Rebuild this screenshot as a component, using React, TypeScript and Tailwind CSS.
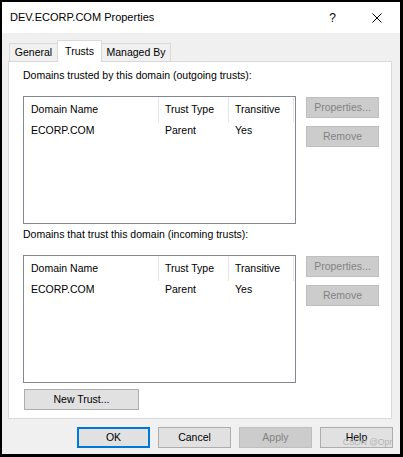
import React from "react";

const font = { fontFamily: '"Liberation Sans", Arial, sans-serif' };

function Btn({ label, w = "w-[73px]", disabled = false, primary = false }: { label: string; w?: string; disabled?: boolean; primary?: boolean }) {
  if (disabled) {
    return (
      <div className={`${w} h-[21px] flex items-center justify-center border border-[#bfbfbf] bg-[#cccccc] text-[#838383]`}>
        {label}
      </div>
    );
  }
  if (primary) {
    return (
      <div className={`${w} h-[21px] flex items-center justify-center border-2 border-[#0078d7] bg-[#e1e1e1] text-black`}>
        {label}
      </div>
    );
  }
  return (
    <div className={`${w} h-[21px] flex items-center justify-center border border-[#adadad] bg-[#e1e1e1] text-black`}>
      {label}
    </div>
  );
}

function TrustList() {
  return (
    <div className="w-[273px] h-[128px] border border-[#828790] bg-white">
      <div className="flex h-[25px]">
        <div className="w-[135px] border-r border-[#e5e5e5] pl-[7px] flex items-center">Domain Name</div>
        <div className="w-[70px] border-r border-[#e5e5e5] pl-[6px] flex items-center">Trust Type</div>
        <div className="w-[65px] border-r border-[#e5e5e5] pl-[6px] flex items-center">Transitive</div>
      </div>
      <div className="flex h-[17px] items-center">
        <div className="w-[135px] pl-[7px]">ECORP.COM</div>
        <div className="w-[70px] pl-[6px]">Parent</div>
        <div className="w-[65px] pl-[6px]">Yes</div>
      </div>
    </div>
  );
}

function Section({ label }: { label: string }) {
  return (
    <>
      <div className="h-[14px] leading-[14px]">{label}</div>
      <div className="flex mt-[14px] gap-[10px]">
        <TrustList />
        <div className="flex flex-col gap-[8px] pt-px">
          <Btn label="Properties..." disabled />
          <Btn label="Remove" disabled />
        </div>
      </div>
    </>
  );
}

export default function App() {
  return (
    <div
      className="w-[403px] h-[457px] border-l-2 border-t-2 border-r-[3px] border-b-[3px] border-black flex flex-col text-[10.5px] text-black bg-[#f0f0f0] overflow-hidden"
      style={font}
    >
      <div className="h-[31px] shrink-0 bg-white flex items-center pl-[8px] text-[11px]">
        <span className="flex-1">DEV.ECORP.COM Properties</span>
        <span className="text-[12px] mr-[36px]">?</span>
        <svg width="10" height="10" viewBox="0 0 10 10" className="mr-[18px]">
          <path d="M0.5 0.5 L9.5 9.5 M9.5 0.5 L0.5 9.5" stroke="#000" strokeWidth="1" fill="none" />
        </svg>
      </div>

      <div className="flex-1 flex flex-col pt-[7px] pl-[6px] pr-[8px] pb-[6px] relative">
        <div className="flex items-end h-[21px] pl-px">
          <div className="w-[48px] h-[18px] border-t border-l border-[#d9d9d9] flex items-center justify-center">General</div>
          <div className="relative z-10 w-[45px] h-[22px] -mb-px bg-white border-t border-l border-r border-[#d9d9d9] flex items-start justify-center pt-[3px]">Trusts</div>
          <div className="w-[69px] h-[18px] border-t border-r border-[#d9d9d9] flex items-center justify-center">Managed By</div>
        </div>

        <div className="h-[358px] bg-white border border-[#d9d9d9] pt-[6px] pl-[14px] flex flex-col">
          <Section label="Domains trusted by this domain (outgoing trusts):" />
          <div className="mt-[3px]">
            <Section label="Domains that trust this domain (incoming trusts):" />
          </div>
          <div className="mt-[6px] ml-px">
            <Btn label="New Trust..." w="w-[115px]" />
          </div>
        </div>

        <div className="flex justify-end gap-[8px] mt-[8px] mr-[-1px]">
          <Btn label="OK" primary />
          <Btn label="Cancel" />
          <Btn label="Apply" disabled />
          <Btn label="Help" />
        </div>

        <span className="absolute right-[8px] bottom-[8px] text-[8.5px] text-[#b4b4b4] leading-none">CSDN @Opr</span>
      </div>
    </div>
  );
}
